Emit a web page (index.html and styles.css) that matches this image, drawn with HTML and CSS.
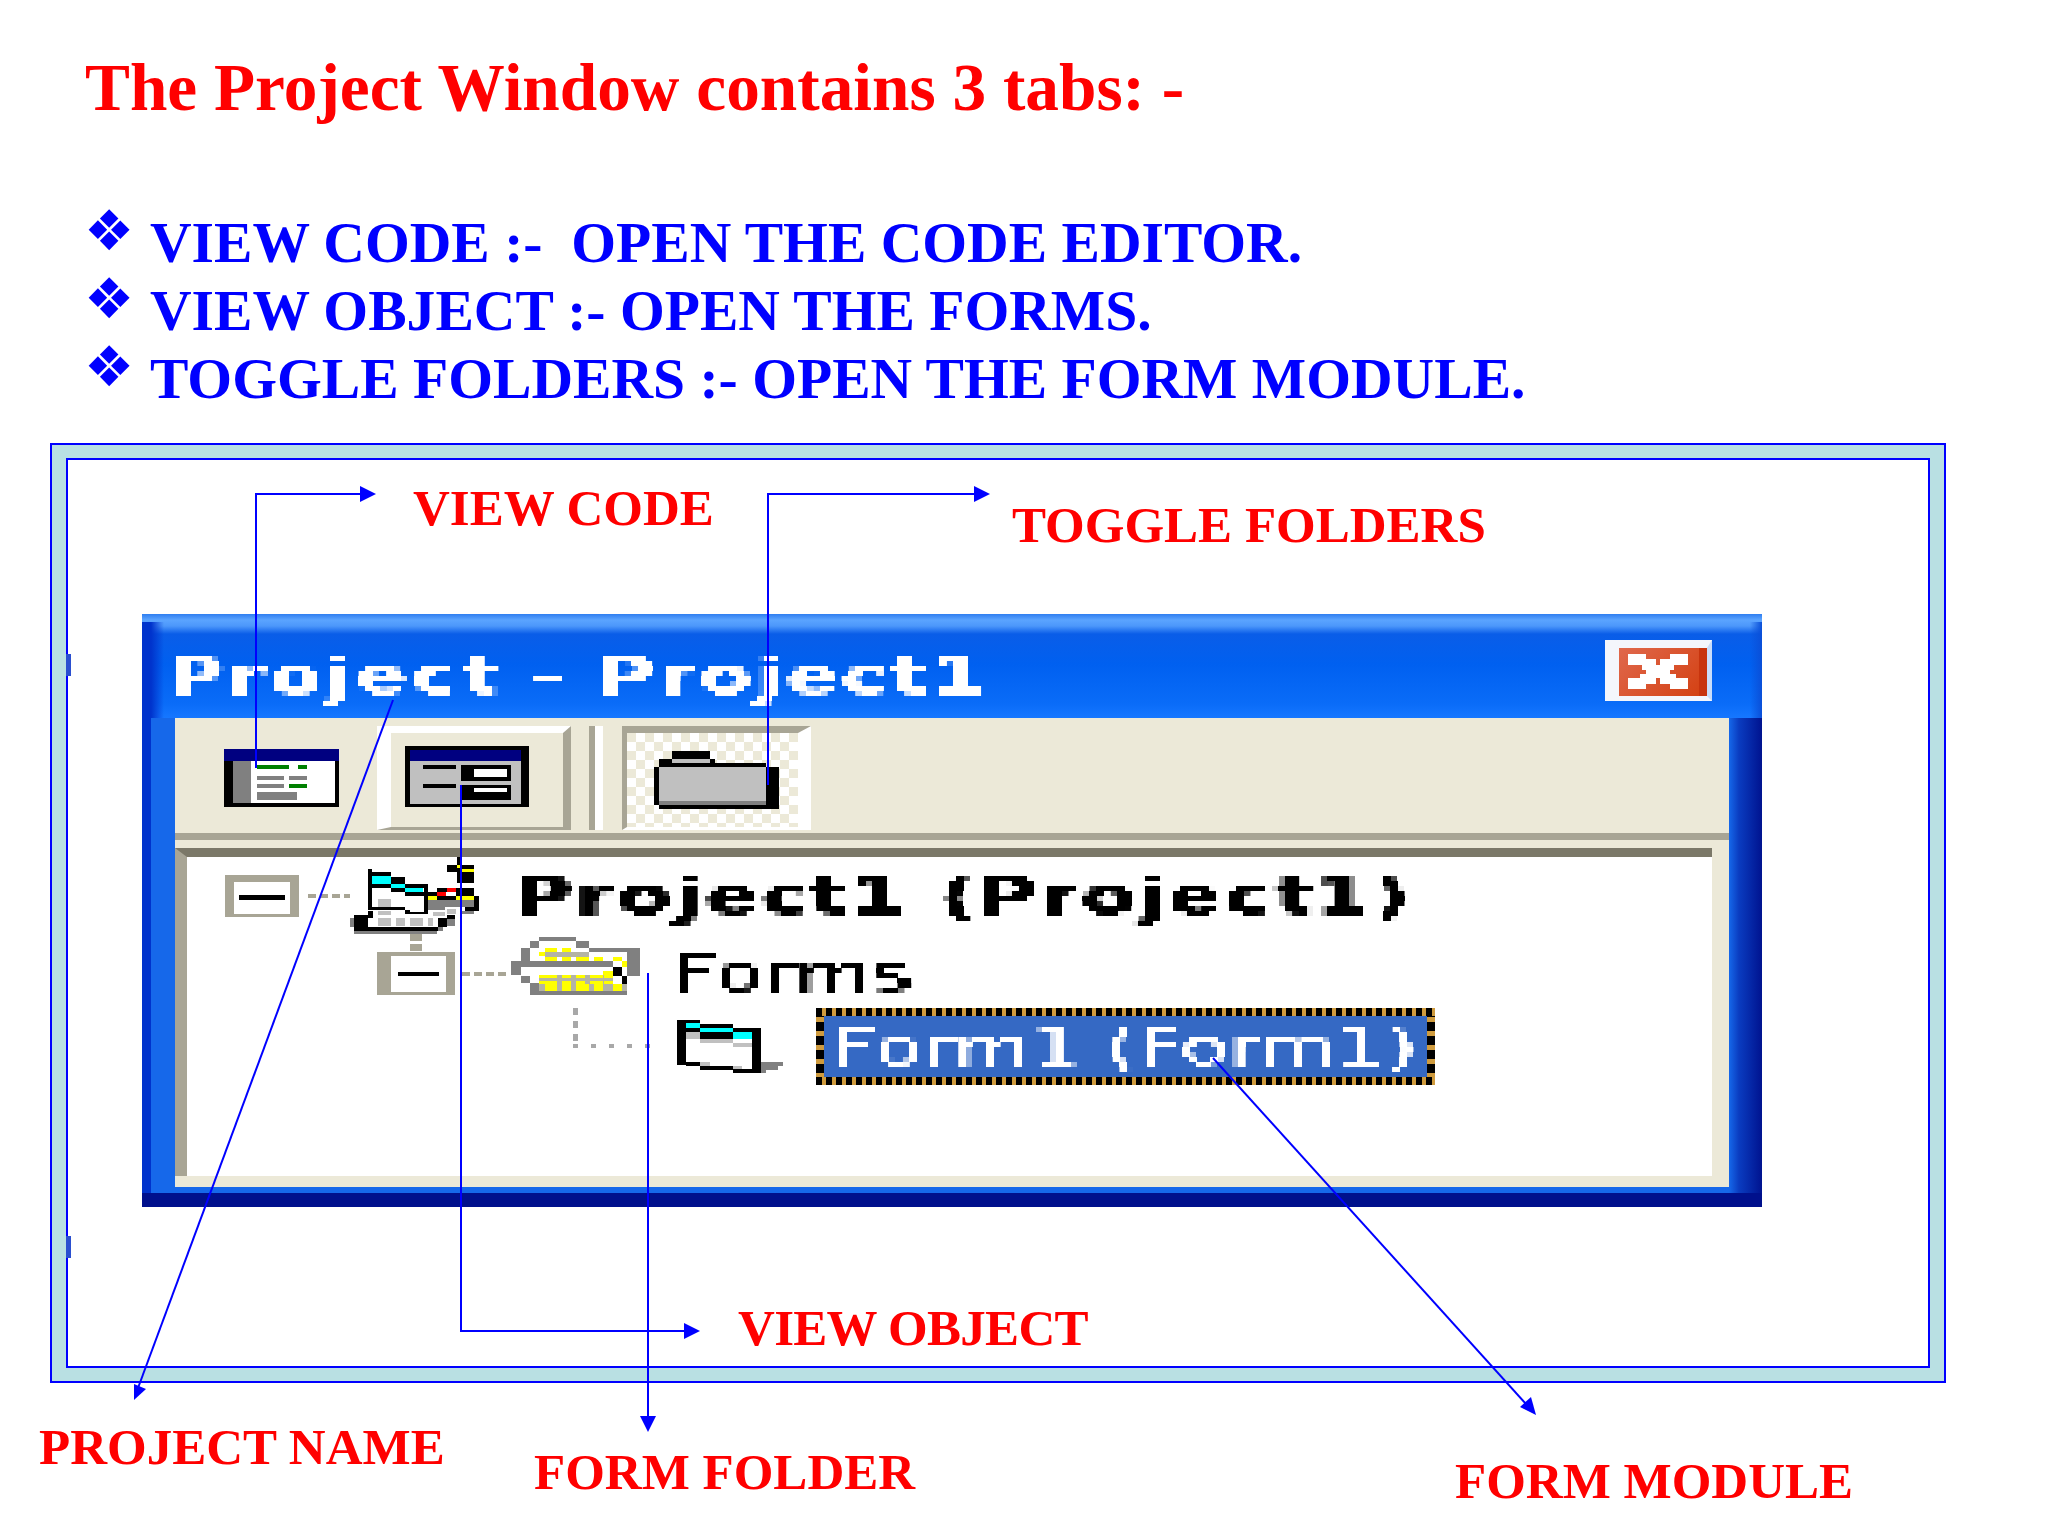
FILE: index.html

```html
<!DOCTYPE html>
<html lang="en">
<head>
  <meta charset="UTF-8" />
  <title>Project Window</title>
  <link rel="stylesheet" href="styles.css">
</head>
<body>

<!-- blocky look of the enlarged bitmap captions -->
<svg class="defs" width="0" height="0">
  <filter id="blocky" x="0" y="0" width="100%" height="100%">
    <feFlood x="2" y="2" width="1" height="1"/>
    <feComposite width="5" height="5"/>
    <feTile result="grid"/>
    <feComposite in="SourceGraphic" in2="grid" operator="in"/>
    <feMorphology operator="dilate" radius="2"/>
  </filter>
</svg>

<div class="slide">
  <h1 class="title">The Project Window contains 3 tabs: -</h1>

  <ul class="points">
    <li>VIEW CODE :-&nbsp; OPEN THE CODE EDITOR.</li>
    <li>VIEW OBJECT :- OPEN THE FORMS.</li>
    <li>TOGGLE FOLDERS :- OPEN THE FORM MODULE.</li>
  </ul>

  <div class="frame">
    <div class="frame-inner">
      <div class="window">
        <div class="titlebar">
          <span class="px-text title-text">Project - Project1</span>
          <div class="close-btn">
            <svg width="60" height="35" viewBox="0 0 60 35" shape-rendering="crispEdges">
              <path fill="#fff" d="M0 0h18v5h10v6H0zM42 0h18v11H32V5h10zM14 11h32v5H14zM18 16h24v4H18zM12 20h36v4H12zM0 24h28v6H18v5H0zM32 24h28v11H42v-5H32z"/>
            </svg>
          </div>
        </div>

        <div class="body">
          <div class="toolbar">
            <div class="tool tool-plain">
              <svg width="115" height="58" viewBox="0 0 115 58" shape-rendering="crispEdges">
                <rect width="115" height="58" fill="#000"/>
                <rect width="115" height="12" fill="#000080"/>
                <rect x="9" y="12" width="102" height="42" fill="#fff"/>
                <rect x="9" y="12" width="18" height="42" fill="#808080"/>
                <rect x="33" y="16" width="32" height="4" fill="#008000"/>
                <rect x="74" y="16" width="9" height="4" fill="#008000"/>
                <rect x="33" y="27" width="27" height="4" fill="#808080"/>
                <rect x="65" y="27" width="18" height="4" fill="#808080"/>
                <rect x="33" y="35" width="27" height="4" fill="#808080"/>
                <rect x="65" y="35" width="18" height="4" fill="#008000"/>
                <rect x="33" y="43" width="40" height="8" fill="#808080"/>
              </svg>
            </div>
            <div class="tool tool-raised">
              <svg class="icon-object" width="124" height="61" viewBox="0 0 124 61" shape-rendering="crispEdges">
                <rect width="124" height="61" fill="#000"/>
                <rect x="5" y="4" width="111" height="11" fill="#000080"/>
                <rect x="5" y="15" width="111" height="43" fill="#c0c0c0"/>
                <rect x="18" y="19" width="33" height="4" fill="#000"/>
                <rect x="18" y="38" width="33" height="4" fill="#000"/>
                <rect x="56" y="19" width="50" height="16" fill="#000"/>
                <rect x="69" y="23" width="33" height="8" fill="#fff"/>
                <rect x="56" y="39" width="50" height="15" fill="#000"/>
                <rect x="69" y="42" width="33" height="4" fill="#fff"/>
              </svg>
            </div>
            <div class="tool-sep"></div>
            <div class="tool tool-pressed">
              <svg width="125" height="58" viewBox="0 0 125 58" shape-rendering="crispEdges">
                <rect x="18" y="0" width="38" height="8" fill="#000"/>
                <rect x="18" y="8" width="38" height="4" fill="#c0c0c0"/>
                <rect x="5" y="8" width="13" height="4" fill="#000"/>
                <rect x="56" y="8" width="5" height="4" fill="#000"/>
                <rect x="5" y="12" width="107" height="4" fill="#000"/>
                <rect x="112" y="16" width="13" height="42" fill="#000"/>
                <rect x="0" y="16" width="5" height="38" fill="#000"/>
                <rect x="5" y="16" width="107" height="34" fill="#c0c0c0"/>
                <rect x="5" y="50" width="107" height="4" fill="#808080"/>
                <rect x="5" y="54" width="120" height="4" fill="#000"/>
              </svg>
            </div>
          </div>

          <div class="tree">
            <div class="tree-row row-project">
              <div class="tree-box"><span></span></div>
              <div class="tree-dash"></div>
              <svg class="icon-project" width="130" height="77" viewBox="0 0 130 77" shape-rendering="crispEdges">
                <path fill="#000" d="M18 12h4v38h-4zM22 15h19v4H22zM22 27h19v4H22zM41 20h14v7H41zM41 31h14v4H41zM55 27h23v4H55zM55 35h23v4H55zM74 31h4v26h-4zM18 50h37v3H18zM55 53h5v4h-5zM60 55h18v2H60zM18 54h5v7h-5zM4 58h14v3H4zM0 61h18v9H0zM4 70h84v4H4zM88 61h9v9h-9zM97 58h8v4h-8zM107 0h3v8h-3zM97 8h27v7H97zM107 15h17v11h-17zM87 31h10v4H87zM78 35h9v4h-9zM106 31h18v8h-18zM87 39h19v4H87zM124 39h5v11h-5zM115 50h14v4h-14z"/>
                <path fill="#00ffff" d="M22 19h19v8H22zM41 27h14v4H41zM55 31h18v4H55z"/>
                <path fill="#ff0000" d="M87 35h9v4h-9zM97 31h9v4h-9z"/>
                <path fill="#ffff00" d="M78 39h9v4h-9zM106 39h18v4h-18zM107 8h3v3h-3zM112 12h12v3h-12z"/>
                <path fill="#808080" d="M78 43h46v7H78zM78 50h17v3H78zM110 54h14v3h-14zM0 61h4v9H0zM4 74h83v3H4zM97 62h8v7h-8zM88 70h5v4h-5z"/>
                <path fill="#c0c0c0" d="M28 42h13v8H28zM28 54h13v4H28zM28 61h13v8H28zM46 61h9v8h-9zM60 61h13v8H60zM78 61h5v8h-5zM83 55h12v4H83zM97 52h9v5h-9z"/>
              </svg>
              <span class="px-text label-project">Project1 (Project1)</span>
            </div>

            <div class="tree-link"></div>

            <div class="tree-row row-forms">
              <div class="tree-box"><span></span></div>
              <div class="tree-dash"></div>
              <svg class="icon-forms" width="129" height="58" viewBox="0 0 129 58" shape-rendering="crispEdges">
                <path fill="#808080" d="M28 0h37v4H28zM19 4h9v7h-9zM65 4h13v7H65zM10 11h9v13h-9zM78 11h51v4H78zM116 15h13v24h-13zM0 24h102v6H0zM0 30h10v8H0zM10 39h9v7h-9zM19 46h9v12h-9zM28 54h88v4H28z"/>
                <path fill="#fff" d="M28 4h37v7H28zM19 11h9v9h-9zM65 11h13v4H65zM78 15h38v4H78zM10 30h82v8H10zM19 38h9v8h-9z"/>
                <path fill="#b4b4a4" d="M34 15h44v5H34zM28 38h74v16H28zM102 47h14v7h-14z"/>
                <path fill="#ffff00" d="M34 11h12v4H34zM51 11h9v4h-9zM28 15h6v4h-6zM34 20h12v4H34zM51 20h9v4h-9zM65 20h13v4H65zM83 20h9v4h-9zM102 20h9v4h-9zM111 24h5v6h-5zM92 34h10v4H92zM28 38h18v3H28zM51 38h9v3h-9zM65 38h9v3h-9zM79 38h13v3H79zM93 38h9v3h-9zM28 44h18v3H28zM51 44h9v3h-9zM65 44h9v3h-9zM79 44h13v3H79zM93 44h9v3h-9zM34 47h12v7H34zM51 47h9v7h-9zM65 47h13v7H65zM83 47h9v7h-9zM102 47h9v7h-9z"/>
                <path fill="#000" d="M102 30h9v9h-9zM111 39h5v8h-5z"/>
              </svg>
              <span class="px-text label-forms">Forms</span>
            </div>

            <div class="tree-row row-form">
              <div class="tree-elbow"></div>
              <svg class="icon-form" width="106" height="54" viewBox="0 0 106 54" shape-rendering="crispEdges">
                <path fill="#000" d="M0 0h23v3H0zM0 3h9v42H0zM9 8h14v4H9zM23 4h33v4H23zM23 12h33v7H23zM56 8h28v4H56zM75 12h9v41h-9zM9 42h14v4H9zM23 46h33v4H23zM56 49h19v4H56z"/>
                <path fill="#00ffff" d="M9 3h14v5H9zM23 8h33v4H23zM56 12h19v7H56z"/>
                <path fill="#c0c0c0" d="M9 12h14v7H9zM23 19h33v4H23zM56 23h19v4H56zM23 42h10v4H23zM56 46h9v3h-9z"/>
                <path fill="#808080" d="M84 42h22v4H84zM84 46h17v4H84zM84 50h5v3h-5z"/>
              </svg>
              <div class="selected">
                <div class="selected-fill">
                  <span class="px-text label-form">Form1 (Form1)</span>
                </div>
              </div>
            </div>
          </div>
        </div>
      </div>

      <i class="frame-tick tick-top"></i>
      <i class="frame-tick tick-bottom"></i>
    </div>
  </div>

  <!-- callouts sit on top of everything, coordinates are the slide's -->
  <svg class="arrows" width="2048" height="1536" viewBox="0 0 2048 1536">
    <g fill="none" stroke="#0000ff" stroke-width="2">
      <path d="M256 768V494H362"/>
      <path d="M768 785V494H976"/>
      <path d="M393 700L138 1388"/>
      <path d="M461 785V1331H686"/>
      <path d="M648 973V1418"/>
      <path d="M1213 1058L1527 1405"/>
    </g>
    <g fill="#0000ff">
      <path d="M376 494L360 486V502Z"/>
      <path d="M990 494L974 486V502Z"/>
      <path d="M134 1400L134 1384L146 1389Z"/>
      <path d="M700 1331L684 1323V1339Z"/>
      <path d="M648 1432L640 1416H656Z"/>
      <path d="M1536 1415L1520 1407L1531 1397Z"/>
    </g>
  </svg>

  <span class="callout c-view-code">VIEW CODE</span>
  <span class="callout c-toggle">TOGGLE FOLDERS</span>
  <span class="callout c-view-object">VIEW OBJECT</span>
  <span class="callout c-project">PROJECT NAME</span>
  <span class="callout c-folder">FORM FOLDER</span>
  <span class="callout c-module">FORM MODULE</span>
</div>

</body>
</html>
```

FILE: styles.css

```css
body {
  margin: 0;
  padding: 0;
  background-color: #ffffff;
  font-family: "Liberation Serif", "Times New Roman", serif;
}

.defs {
  position: absolute;
}

.slide {
  position: relative;
  width: 2048px;
  height: 1536px;
  overflow: hidden;
  padding: 52px 0 0 50px;
  box-sizing: border-box;
}

.title {
  margin: 0 0 0 35px;
  font-size: 67.3px;
  line-height: 72px;
  font-weight: bold;
  color: #ff0000;
}

.points {
  list-style: none;
  margin: 85px 0 0 0;
  padding: 0;
}

.points li {
  position: relative;
  padding-left: 100px;
  font-size: 57.6px;
  line-height: 68px;
  font-weight: bold;
  color: #0000ff;
}

.points li::before {
  content: "\2756";
  position: absolute;
  left: 34px;
  top: -8px;
  font-family: "DejaVu Sans", sans-serif;
  font-size: 56px;
  line-height: 60px;
}

/* outer teal frame */
.frame {
  width: 1896px;
  height: 940px;
  box-sizing: border-box;
  margin-top: 30px;
  padding: 13px 14px;
  background-color: #b9e0e3;
  border: 2px solid #0000ff;
}

.frame-inner {
  position: relative;
  height: 100%;
  box-sizing: border-box;
  padding: 154px 0 0 74px;
  background-color: #ffffff;
  border: 2px solid #0000ff;
}

.frame-tick {
  position: absolute;
  left: -2px;
  width: 5px;
  height: 22px;
  background-color: #2a4fd0;
}

.tick-top { top: 194px; }
.tick-bottom { top: 776px; }

/* XP style project window */
.window {
  width: 1620px;
  height: 593px;
  box-sizing: border-box;
  display: flex;
  flex-direction: column;
  background: linear-gradient(90deg, #0033cc 0, #0033cc 9px, #1668ea 9px, #1668ea 1587px, #0a3cc0 1597px, #00138f 1620px);
  border-bottom: 14px solid #00108c;
}

.titlebar {
  height: 104px;
  flex-shrink: 0;
  display: flex;
  align-items: center;
  justify-content: space-between;
  padding: 20px 50px 0 27px;
  box-sizing: border-box;
  background:
    linear-gradient(90deg, #0033cc 0, #0033cc 9px, transparent 22px, transparent 1608px, #0a4fd8 1620px) 0 8px / 100% 96px no-repeat,
    linear-gradient(180deg, #2f7ef0 0, #5ba4ff 6px, #4c97fb 12px, #0a5de8 20px, #0060f0 50px, #0a6cf8 90px, #1677ff 104px);
}

.px-text {
  display: inline-block;
  font-family: "DejaVu Sans", sans-serif;
  transform-origin: left center;
  white-space: nowrap;
  filter: url(#blocky);
}

.title-text {
  font-size: 52px;
  font-weight: bold;
  color: #ffffff;
  letter-spacing: 3px;
  transform: scaleX(1.45);
}

.close-btn {
  width: 107px;
  height: 61px;
  margin-top: -12px;
  box-sizing: border-box;
  display: flex;
  align-items: center;
  justify-content: center;
  padding-right: 10px;
  background-color: #d84a24;
  background-image: linear-gradient(135deg, #e0684c, #d33f10);
  border-style: solid;
  border-width: 8px 5px 5px 14px;
  border-color: #f4f6fc #c9ddfa #f4f6fc #f4f6fc;
  box-shadow: inset -8px 0 0 #c8340e;
}

.body {
  flex: 1;
  margin: 0 33px 6px 33px;
  display: flex;
  flex-direction: column;
  min-height: 0;
  background-color: #ece9d8;
}

.toolbar {
  height: 122px;
  flex-shrink: 0;
  box-sizing: border-box;
  display: flex;
  align-items: stretch;
  padding: 8px 0 3px 49px;
  border-bottom: 7px solid #a8a595;
}

.tool {
  display: flex;
  align-items: center;
  justify-content: flex-start;
  box-sizing: border-box;
}

.tool-plain {
  width: 116px;
  margin-right: 37px;
}

.tool-raised {
  width: 194px;
  padding-left: 14px;
  border-style: solid;
  border-width: 7px 8px 3px 14px;
  border-color: #ffffff #a8a595 #a8a595 #ffffff;
}

.icon-object {
  margin-bottom: 7px;
}

.tool-sep {
  width: 14px;
  margin: 0 19px 0 18px;
  border-left: 6px solid #a8a595;
  border-right: 8px solid #ffffff;
  box-sizing: border-box;
}

.tool-pressed {
  width: 189px;
  padding-left: 27px;
  border-style: solid;
  border-width: 7px 13px 3px 5px;
  border-color: #a8a595 #ffffff #ffffff #a8a595;
  background-color: #ece9d8;
  background-image:
    linear-gradient(45deg, #ffffff 25%, transparent 25%, transparent 75%, #ffffff 75%),
    linear-gradient(45deg, #ffffff 25%, transparent 25%, transparent 75%, #ffffff 75%);
  background-size: 18px 18px;
  background-position: 0 0, 9px 9px;
}

.tree {
  flex: 1;
  min-height: 0;
  margin: 8px 0 0 0;
  padding: 0 14px 11px 0;
  background-color: #ece9d8;
  position: relative;
}

.tree::before {
  content: "";
  position: absolute;
  left: 0;
  top: 0;
  right: 17px;
  bottom: 11px;
  background-color: #ffffff;
  border-top: 9px solid #7b7868;
  border-left: 12px solid #a8a595;
}

.tree-row {
  position: relative;
  display: flex;
  align-items: center;
}

.row-project {
  padding: 9px 0 0 50px;
}

.tree-box {
  box-sizing: border-box;
  width: 74px;
  height: 42px;
  flex-shrink: 0;
  display: flex;
  align-items: center;
  justify-content: center;
  background-color: #ffffff;
  border: 9px solid #a8a595;
  border-width: 7px 9px 3px;
}

.tree-box span {
  display: block;
  width: 46px;
  height: 5px;
  background-color: #000000;
}

.tree-dash {
  width: 42px;
  height: 4px;
  margin: 0 9px;
  flex-shrink: 0;
  background-image: repeating-linear-gradient(90deg, #a8a595 0, #a8a595 8px, transparent 8px, transparent 12px);
}

.icon-project {
  flex-shrink: 0;
  margin-left: -9px;
}

.label-project {
  margin-left: 35px;
  font-size: 52px;
  font-weight: bold;
  color: #000000;
  letter-spacing: 2.3px;
  transform: scaleX(1.5);
}

.tree-link {
  position: relative;
  width: 12px;
  height: 18px;
  margin-left: 235px;
  background-image: repeating-linear-gradient(180deg, #a8a595 0, #a8a595 7px, transparent 7px, transparent 10px);
}

.row-forms {
  margin-top: -15px;
  padding-left: 202px;
  height: 58px;
}

.row-forms .tree-box {
  width: 78px;
  height: 43px;
  margin-top: 15px;
  border-width: 4px 9px 3px 14px;
}

.row-forms .tree-box span {
  width: 41px;
  height: 4px;
}

.row-forms .tree-dash {
  width: 45px;
  margin: 15px 4px 0 7px;
}

.icon-forms {
  flex-shrink: 0;
}

.label-forms {
  margin-left: 33px;
  margin-top: 13px;
  font-size: 52px;
  font-weight: normal;
  color: #000000;
  letter-spacing: 0.4px;
  transform: scaleX(1.5);
}

.row-form {
  padding-left: 398px;
  margin-top: 13px;
}

.tree-elbow {
  width: 87px;
  height: 40px;
  margin: -37px 17px 0 0;
  flex-shrink: 0;
  background:
    repeating-linear-gradient(180deg, #a8a8a8 0, #a8a8a8 7px, transparent 7px, transparent 13px) left top / 5px 100% no-repeat,
    repeating-linear-gradient(90deg, #a8a8a8 0, #a8a8a8 5px, transparent 5px, transparent 18px) left bottom / 100% 4px no-repeat;
}

.icon-form {
  flex-shrink: 0;
}

.selected {
  width: 619px;
  height: 77px;
  margin-left: 33px;
  box-sizing: border-box;
  padding: 8px;
  background:
    repeating-linear-gradient(90deg, #000000 0, #000000 6px, #cf9b3e 6px, #cf9b3e 10px) left top / 100% 8px no-repeat,
    repeating-linear-gradient(90deg, #000000 0, #000000 6px, #cf9b3e 6px, #cf9b3e 10px) left bottom / 100% 8px no-repeat,
    repeating-linear-gradient(180deg, #000000 0, #000000 9px, #cf9b3e 9px, #cf9b3e 14px) left top / 8px 100% no-repeat,
    repeating-linear-gradient(180deg, #000000 0, #000000 9px, #cf9b3e 9px, #cf9b3e 14px) right top / 8px 100% no-repeat;
}

.selected-fill {
  height: 100%;
  display: flex;
  align-items: center;
  padding-left: 8px;
  background-color: #3569c4;
}

.label-form {
  font-size: 52px;
  color: #ffffff;
  letter-spacing: 0.4px;
  transform: scaleX(1.5);
}

/* callout layer */
.arrows {
  position: absolute;
  left: 0;
  top: 0;
  pointer-events: none;
}

.callout {
  position: absolute;
  font-size: 51px;
  line-height: 56px;
  font-weight: bold;
  color: #ff0000;
  white-space: nowrap;
}

.c-view-code { left: 413px; top: 480px; }
.c-toggle { left: 1012px; top: 497px; }
.c-view-object { left: 738px; top: 1300px; letter-spacing: -0.7px; }
.c-project { left: 39px; top: 1419px; }
.c-folder { left: 534px; top: 1444px; }
.c-module { left: 1455px; top: 1453px; }
```
